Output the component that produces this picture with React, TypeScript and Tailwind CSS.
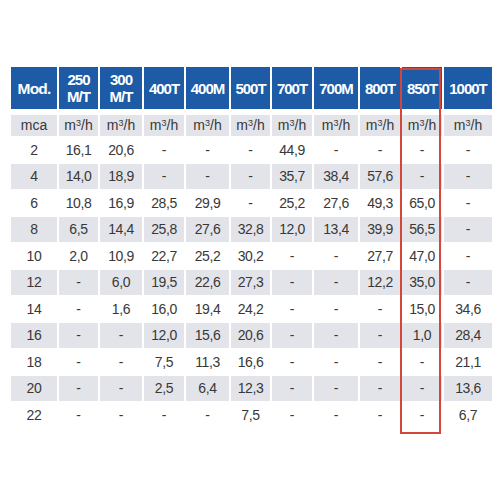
const cols = "grid grid-cols-[46px_39px_42px_40px_43px_39px_40px_44px_40px_40px_48px] gap-x-[2px]"

const headers: string[][] = [
  ["Mod."],
  ["250", "M/T"],
  ["300", "M/T"],
  ["400T"],
  ["400M"],
  ["500T"],
  ["700T"],
  ["700M"],
  ["800T"],
  ["850T"],
  ["1000T"],
]

const rows: string[][] = [
  ["2", "16,1", "20,6", "-", "-", "-", "44,9", "-", "-", "-", "-"],
  ["4", "14,0", "18,9", "-", "-", "-", "35,7", "38,4", "57,6", "-", "-"],
  ["6", "10,8", "16,9", "28,5", "29,9", "-", "25,2", "27,6", "49,3", "65,0", "-"],
  ["8", "6,5", "14,4", "25,8", "27,6", "32,8", "12,0", "13,4", "39,9", "56,5", "-"],
  ["10", "2,0", "10,9", "22,7", "25,2", "30,2", "-", "-", "27,7", "47,0", "-"],
  ["12", "-", "6,0", "19,5", "22,6", "27,3", "-", "-", "12,2", "35,0", "-"],
  ["14", "-", "1,6", "16,0", "19,4", "24,2", "-", "-", "-", "15,0", "34,6"],
  ["16", "-", "-", "12,0", "15,6", "20,6", "-", "-", "-", "1,0", "28,4"],
  ["18", "-", "-", "7,5", "11,3", "16,6", "-", "-", "-", "-", "21,1"],
  ["20", "-", "-", "2,5", "6,4", "12,3", "-", "-", "-", "-", "13,6"],
  ["22", "-", "-", "-", "-", "7,5", "-", "-", "-", "-", "6,7"],
]

export default function App() {
  return (
    <div
      className="h-[500px] w-[500px] bg-white pl-[11px] pt-[67px]"
      style={{ fontFamily: '"Liberation Sans", Arial, sans-serif' }}
    >
      <div className="relative flex flex-col gap-y-[1.5px]">
        {/* header */}
        <div className={`${cols} mb-[4.5px] h-[42px]`}>
          {headers.map((h, i) => (
            <div
              key={i}
              className={`flex flex-col items-center justify-center bg-[#1d5ba6] font-bold leading-[17px] text-white ${
                i === 0 ? "text-[15.5px] tracking-[-0.8px]" : "text-[15px] tracking-[-1px]"
              }`}
            >
              {h.map((line) => (
                <span key={line}>{line}</span>
              ))}
            </div>
          ))}
        </div>

        {/* units */}
        <div className={`${cols} h-[21px]`}>
          {headers.map((_, i) => (
            <div
              key={i}
              className="flex items-center justify-center bg-[#e3e4e9] text-[14px] text-[#383838]"
            >
              {i === 0 ? (
                "mca"
              ) : (
                <span>
                  m<sup className="text-[9px]">3</sup>/h
                </span>
              )}
            </div>
          ))}
        </div>

        {rows.map((r, ri) => (
          <div key={ri} className={`${cols} h-[25px]`}>
            {r.map((v, ci) => (
              <div
                key={ci}
                className={`flex items-center justify-center text-[14px] tracking-[-0.4px] text-[#383838] ${
                  ri % 2 === 1 ? "bg-[#e3e4e9]" : "bg-white"
                }`}
              >
                {v}
              </div>
            ))}
          </div>
        ))}

        {/* highlight of 850T column */}
        <div className="pointer-events-none absolute left-[389px] top-[1px] h-[366px] w-[41px] border-2 border-[#d2463c]" />
      </div>
    </div>
  )
}
